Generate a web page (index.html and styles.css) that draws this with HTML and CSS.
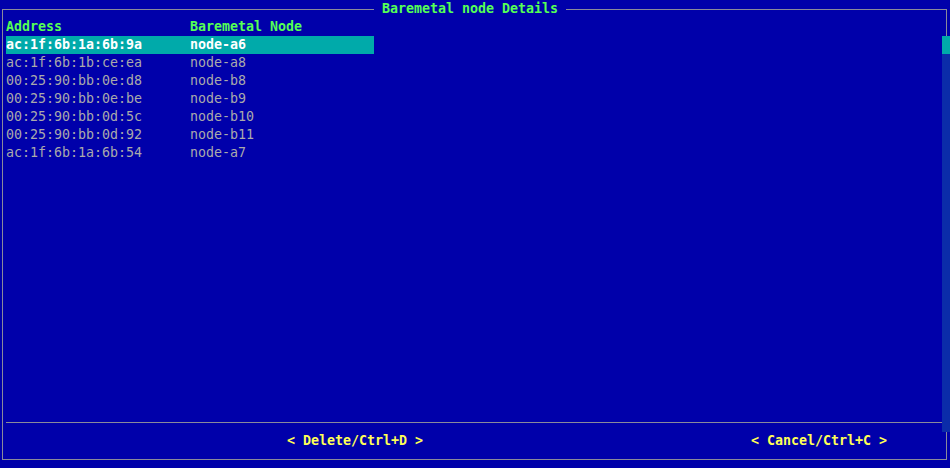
FILE: index.html
```html
<!DOCTYPE html>
<html>
<head>
<meta charset="utf-8">
<link rel="stylesheet" href="styles.css">
</head>
<body>
<div class="frame">
  <div class="title">Baremetal node Details</div>
  <div class="row head">
    <span class="cell">Address</span><span class="cell">Baremetal Node</span>
  </div>
  <div class="list">
    <div class="row sel"><span class="cell">ac:1f:6b:1a:6b:9a</span><span class="cell">node-a6</span></div>
    <div class="row"><span class="cell">ac:1f:6b:1b:ce:ea</span><span class="cell">node-a8</span></div>
    <div class="row"><span class="cell">00:25:90:bb:0e:d8</span><span class="cell">node-b8</span></div>
    <div class="row"><span class="cell">00:25:90:bb:0e:be</span><span class="cell">node-b9</span></div>
    <div class="row"><span class="cell">00:25:90:bb:0d:5c</span><span class="cell">node-b10</span></div>
    <div class="row"><span class="cell">00:25:90:bb:0d:92</span><span class="cell">node-b11</span></div>
    <div class="row"><span class="cell">ac:1f:6b:1a:6b:54</span><span class="cell">node-a7</span></div>
  </div>
  <div class="sep"></div>
  <div class="buttons">
    <span class="btn btn-delete">&lt; Delete/Ctrl+D &gt;</span>
    <span class="btn btn-cancel">&lt; Cancel/Ctrl+C &gt;</span>
  </div>
  <div class="scrollbar"><div class="thumb"></div></div>
</div>
</body>
</html>
```
FILE: styles.css
```css
html, body {
  margin: 0;
  padding: 0;
  background: #0000aa;
  width: 950px;
  height: 468px;
  overflow: hidden;
}
body {
  box-sizing: border-box;
  padding: 9px 0 0 2px;
  font-family: "DejaVu Sans Mono", "Liberation Mono", monospace;
  font-size: 13.3px;
  line-height: 18px;
  color: #aaaaaa;
}
.frame {
  position: relative;
  box-sizing: border-box;
  width: 945px;
  height: 451px;
  border: 1px solid #8a8a9a;
  padding: 8px 0 9px 3px;
  display: flex;
  flex-direction: column;
}
.title {
  position: absolute;
  left: 371px;
  top: -10px;
  padding: 0 8px;
  background: #0000aa;
  color: #55ff55;
  font-weight: bold;
  height: 18px;
  white-space: pre;
}
.row {
  display: flex;
  width: 368px;
  height: 18px;
}
.cell {
  width: 184px;
  white-space: pre;
}
.head {
  color: #55ff55;
  font-weight: bold;
}
.list {
  flex: 1;
}
.sel {
  background: #00aaaa;
  color: #ffffff;
  font-weight: bold;
}
.sep {
  margin: 8px 0 9px 0;
  width: 936px;
  height: 1px;
  background: #8a8a9a;
}
.buttons {
  display: flex;
  height: 18px;
  padding-left: 281px;
  color: #ffff55;
  font-weight: bold;
}
.btn {
  white-space: pre;
}
.btn-delete {
  width: 464px;
}
.scrollbar {
  position: absolute;
  left: 939px;
  top: 26px;
  width: 8px;
  height: 396px;
  background: #0b2ca9;
}
.thumb {
  height: 18px;
  background: #00aaaa;
}
```
